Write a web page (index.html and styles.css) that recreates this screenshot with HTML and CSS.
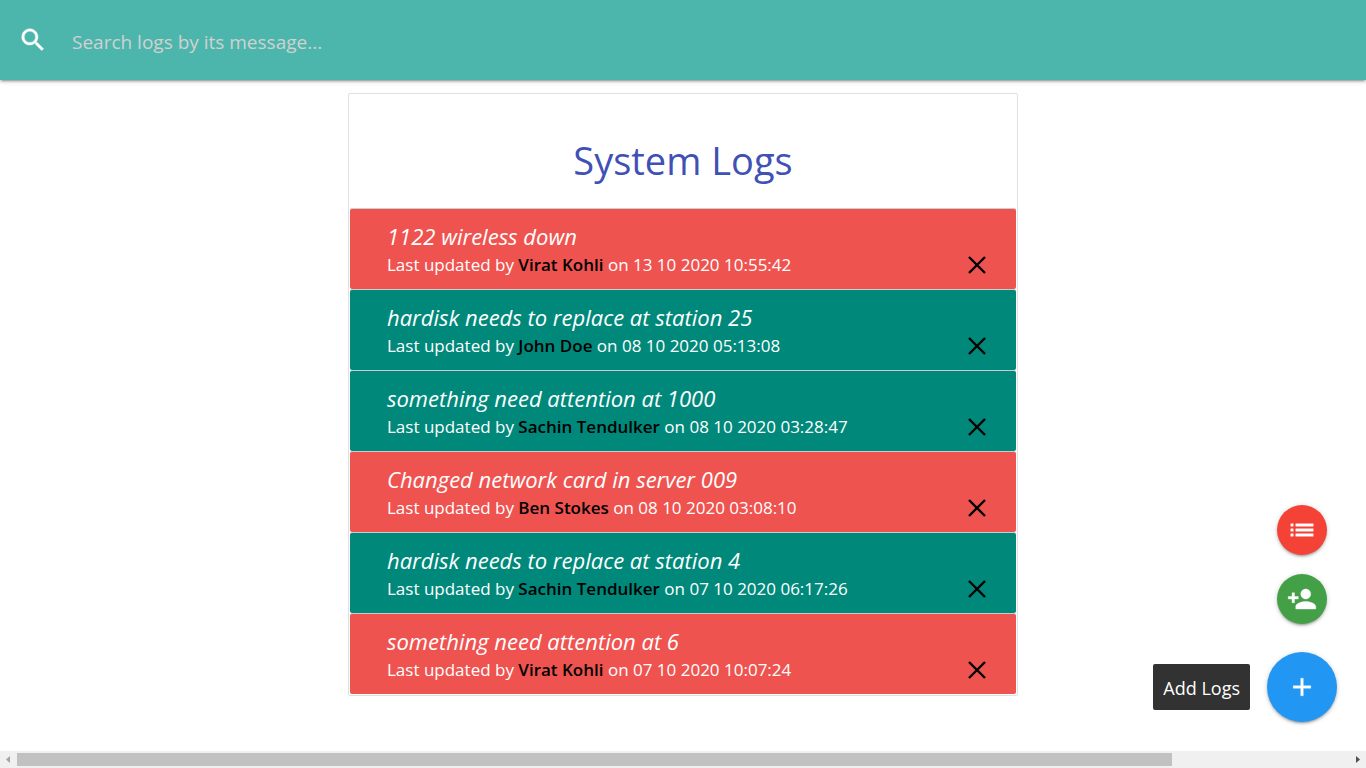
FILE: index.html
```html
<!DOCTYPE html>
<html lang="en">
<head>
<meta charset="utf-8">
<meta name="viewport" content="width=device-width, initial-scale=1">
<title>System Logs</title>
<link rel="stylesheet" href="styles.css">
</head>
<body>
<svg class="sprite" aria-hidden="true">
  <symbol id="close" viewBox="0 0 18 18"><path d="M1 1 17 17M17 1 1 17" fill="none" stroke="#000" stroke-width="2.4"/></symbol>
</svg>
<nav class="navbar">
  <form class="search">
    <label class="search-label" for="search" aria-label="Search logs">
      <svg class="icon" viewBox="0 0 24 24" width="30" height="30"><path d="M15.5 14h-.79l-.28-.27C15.41 12.59 16 11.11 16 9.5 16 5.91 13.09 3 9.5 3S3 5.910 3 9.500 5.910 16 9.500 16c1.610 0 3.090-.590 4.230-1.570l.270.280v.790l5 4.990L20.490 19l-4.990-5zm-6 0C7.010 14 5 11.990 5 9.500S7.010 5 9.500 5 14 7.010 14 9.500 11.990 14 9.500 14z"/></svg>
    </label>
    <input class="search-input" id="search" type="search" placeholder="Search logs by its message...">
  </form>
</nav>
<main class="container">
  <section class="collection">
    <h1 class="title">System Logs</h1>
    <ul class="logs">
      <li class="log log-red">
        <div><a class="message" href="#">1122 wireless down</a><p class="meta">Last updated by <span class="name">Virat Kohli</span> on 13 10 2020 10:55:42</p></div>
        <button class="delete" type="button" aria-label="Delete log"><svg width="18" height="18"><use href="#close"/></svg></button>
      </li>
      <li class="log log-teal">
        <div><a class="message" href="#">hardisk needs to replace at station 25</a><p class="meta">Last updated by <span class="name">John Doe</span> on 08 10 2020 05:13:08</p></div>
        <button class="delete" type="button" aria-label="Delete log"><svg width="18" height="18"><use href="#close"/></svg></button>
      </li>
      <li class="log log-teal">
        <div><a class="message" href="#">something need attention at 1000</a><p class="meta">Last updated by <span class="name">Sachin Tendulker</span> on 08 10 2020 03:28:47</p></div>
        <button class="delete" type="button" aria-label="Delete log"><svg width="18" height="18"><use href="#close"/></svg></button>
      </li>
      <li class="log log-red">
        <div><a class="message" href="#">Changed network card in server 009</a><p class="meta">Last updated by <span class="name">Ben Stokes</span> on 08 10 2020 03:08:10</p></div>
        <button class="delete" type="button" aria-label="Delete log"><svg width="18" height="18"><use href="#close"/></svg></button>
      </li>
      <li class="log log-teal">
        <div><a class="message" href="#">hardisk needs to replace at station 4</a><p class="meta">Last updated by <span class="name">Sachin Tendulker</span> on 07 10 2020 06:17:26</p></div>
        <button class="delete" type="button" aria-label="Delete log"><svg width="18" height="18"><use href="#close"/></svg></button>
      </li>
      <li class="log log-red">
        <div><a class="message" href="#">something need attention at 6</a><p class="meta">Last updated by <span class="name">Virat Kohli</span> on 07 10 2020 10:07:24</p></div>
        <button class="delete" type="button" aria-label="Delete log"><svg width="18" height="18"><use href="#close"/></svg></button>
      </li>
    </ul>
  </section>
</main>
<div class="actions">
  <button class="fab fab-red" type="button" aria-label="Technician list">
    <svg class="icon" viewBox="0 0 24 24" width="30" height="30"><path d="M3 13h2v-2H3v2zm0 4h2v-2H3v2zm0-8h2V7H3v2zm4 4h14v-2H7v2zm0 4h14v-2H7v2zM7 7v2h14V7H7z"/></svg>
  </button>
  <button class="fab fab-green" type="button" aria-label="Add technician">
    <svg class="icon" viewBox="0 0 24 24" width="30" height="30"><path d="M15 12c2.210 0 4-1.790 4-4s-1.790-4-4-4-4 1.790-4 4 1.790 4 4 4zm-9-2V7H4v3H1v2h3v3h2v-3h3v-2H6zm9 4c-2.670 0-8 1.340-8 4v2h16v-2c0-2.660-5.330-4-8-4z"/></svg>
  </button>
  <div class="add">
    <span class="tooltip" id="add-tip" role="tooltip">Add Logs</span>
    <button class="fab fab-large" type="button" aria-label="Add Logs" aria-describedby="add-tip">
      <svg class="icon" viewBox="0 0 24 24" width="30" height="30"><path d="M19 13h-6v6h-2v-6H5v-2h6V5h2v6h6v2z"/></svg>
    </button>
  </div>
</div>
<div class="scrollbar" aria-hidden="true">
  <svg width="17" height="17"><path d="M10 5v7L6 8.500z" fill="#a3a3a3"/></svg>
  <div class="track"><div class="thumb"></div></div>
  <svg width="17" height="17"><path d="M7 5v7l4-3.500z" fill="#505050"/></svg>
</div>
</body>
</html>
```
FILE: styles.css
```css
* {
  box-sizing: border-box;
}

body {
  margin: 0;
  background: #fff;
  font-family: "Segoe UI", "Open Sans", "Noto Sans", sans-serif;
  font-size: 17px;
  color: #fff;
}

button {
  padding: 0;
  border: 0;
  cursor: pointer;
}

svg {
  display: block;
}

.icon {
  fill: #fff;
  stroke: #fff;
  stroke-width: 0.3;
}

.sprite {
  position: absolute;
  width: 0;
  height: 0;
}

.navbar {
  height: 80px;
  background: #4db6ac;
  box-shadow: 0 2px 2px 0 rgba(0, 0, 0, 0.14), 0 3px 1px -2px rgba(0, 0, 0, 0.12), 0 1px 5px 0 rgba(0, 0, 0, 0.2);
}

.search {
  display: flex;
  align-items: center;
  height: 100%;
  padding-left: 18px;
}

.search-label {
  width: 54px;
}

.search-input {
  flex: 1;
  height: 100%;
  padding: 4px 0 0;
  border: 0;
  outline: 0;
  background: transparent;
  color: #fff;
  font: inherit;
  font-size: 19px;
}

.search-input::placeholder {
  color: #d1d1d1;
  opacity: 1;
}

.container {
  width: 90%;
  max-width: 670px;
  margin: 13px auto 55px;
}

.collection {
  padding: 1px;
  border: 1px solid #e0e0e0;
  border-radius: 2px;
}

.title {
  margin: 0;
  padding: 39px 0 23px;
  color: #3f51b5;
  font-size: 38px;
  font-weight: 400;
  line-height: 52px;
  text-align: center;
}

.logs {
  display: grid;
  gap: 1px;
  margin: 0;
  padding: 0;
  list-style: none;
}

.log {
  display: flex;
  align-items: flex-end;
  justify-content: space-between;
  padding: 12px 30px 10px 37px;
  border-radius: 2px;
  box-shadow: 0 -1px 0 #ccc;
}

.log-red {
  background: #ef5350;
}

.log-teal {
  background: #00897b;
}

.message {
  display: block;
  color: #fff;
  font-size: 22px;
  font-style: italic;
  line-height: 30px;
  text-decoration: none;
}

.meta {
  margin: 0;
  line-height: 28px;
}

.name {
  color: #000;
  font-weight: 600;
}

.delete {
  padding-bottom: 5px;
  background: none;
}

.actions {
  position: fixed;
  right: 29px;
  bottom: 46px;
  display: flex;
  flex-direction: column;
  align-items: flex-end;
}

.fab {
  display: grid;
  place-items: center;
  width: 50px;
  height: 50px;
  margin: 0 10px 19px 0;
  border-radius: 50%;
  box-shadow: 0 2px 2px 0 rgba(0, 0, 0, 0.14), 0 3px 1px -2px rgba(0, 0, 0, 0.12), 0 1px 5px 0 rgba(0, 0, 0, 0.2);
}

.fab-red {
  background: #f44336;
}

.fab-green {
  margin-bottom: 28px;
  background: #43a047;
}

.fab-large {
  width: 70px;
  height: 70px;
  margin: 0;
  background: #2196f3;
}

.add {
  display: flex;
  align-items: center;
  gap: 17px;
}

.tooltip {
  padding: 10px 10px 8px;
  border-radius: 2px;
  background: #323232;
  font-size: 18px;
  line-height: 28px;
}

.scrollbar {
  position: fixed;
  right: 0;
  bottom: 0;
  left: 0;
  display: flex;
  height: 17px;
  background: #f0f0f0;
}

.track {
  flex: 1;
  padding: 2px 0;
}

.thumb {
  width: 86.7%;
  height: 13px;
  background: #c1c1c1;
}
```
